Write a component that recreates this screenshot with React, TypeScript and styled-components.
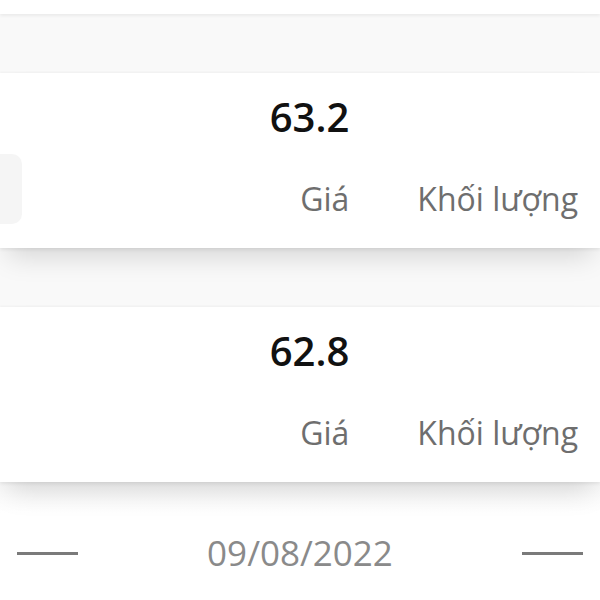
import React from 'react';
import styled, { createGlobalStyle } from 'styled-components';

type tradeType = {
  id: string;
  price: string;
  tagged?: boolean;
};

const trades: tradeType[] = [
  { id: 't1', price: '63.2', tagged: true },
  { id: 't2', price: '62.8' },
];

const GlobalStyle = createGlobalStyle`
  html, body {
    margin: 0;
    padding: 0;
    background: #ffffff;
  }
  body {
    font-family: "Open Sans", "Noto Sans", sans-serif;
  }
`;

const TradeCard = ({ trade }: { trade: tradeType }) => (
  <Card>
    {trade.tagged && <SideTag />}
    <Grid>
      <Price>{trade.price}</Price>
      <span />
      <Label>Giá</Label>
      <Label>Khối lượng</Label>
    </Grid>
  </Card>
);

const App = () => (
  <>
    <GlobalStyle />
    <Screen>
      <List>
        {/* bottom of the card scrolled above the view */}
        <CardEdge />
        {trades.map((t) => (
          <TradeCard key={t.id} trade={t} />
        ))}
      </List>
      <DateBar>
        <Dash />
        <DateText>09/08/2022</DateText>
        <Dash />
      </DateBar>
    </Screen>
  </>
);

const Screen = styled.div`
  width: 600px;
  height: 600px;
  overflow: hidden;
  background: #ffffff;
  display: flex;
  flex-direction: column;
`;

const List = styled.div`
  padding-bottom: 31px;
  display: flex;
  flex-direction: column;
  gap: 59px;
  background: linear-gradient(#f9f9f9, #f9f9f9 calc(100% - 30px), #ffffff);
`;

const shadow = `
  box-shadow: 0 -1px 2px rgba(0, 0, 0, 0.04), 0 2px 3px rgba(0, 0, 0, 0.06),
    0 16px 26px -8px rgba(0, 0, 0, 0.15);
`;

const CardEdge = styled.div`
  height: 14px;
  background: #ffffff;
  position: relative;
  ${shadow}
`;

const Card = styled.div`
  height: 175px;
  box-sizing: border-box;
  display: flex;
  background: #ffffff;
  position: relative;
  ${shadow}
`;

const SideTag = styled.div`
  width: 22px;
  height: 70px;
  margin-top: 81px;
  border-radius: 0 10px 10px 0;
  background: #f5f5f5;
`;

const Grid = styled.div`
  flex: 1;
  display: grid;
  grid-template-columns: auto auto;
  justify-content: end;
  justify-items: end;
  column-gap: 68px;
  row-gap: 38px;
  padding: 20px 22px 29px 0;
`;

const Price = styled.div`
  font-size: 40px;
  line-height: 48px;
  font-weight: 600;
  color: #111111;
`;

const Label = styled.div`
  font-size: 32px;
  line-height: 40px;
  color: #6e6e6e;
`;

const DateBar = styled.div`
  display: flex;
  align-items: center;
  justify-content: space-between;
  padding: 16px 17px 0;
`;

const Dash = styled.div`
  width: 61px;
  height: 3px;
  background: #7a7a7a;
`;

const DateText = styled.div`
  font-size: 35px;
  line-height: 48px;
  color: #8a8a8a;
`;

export default App;
